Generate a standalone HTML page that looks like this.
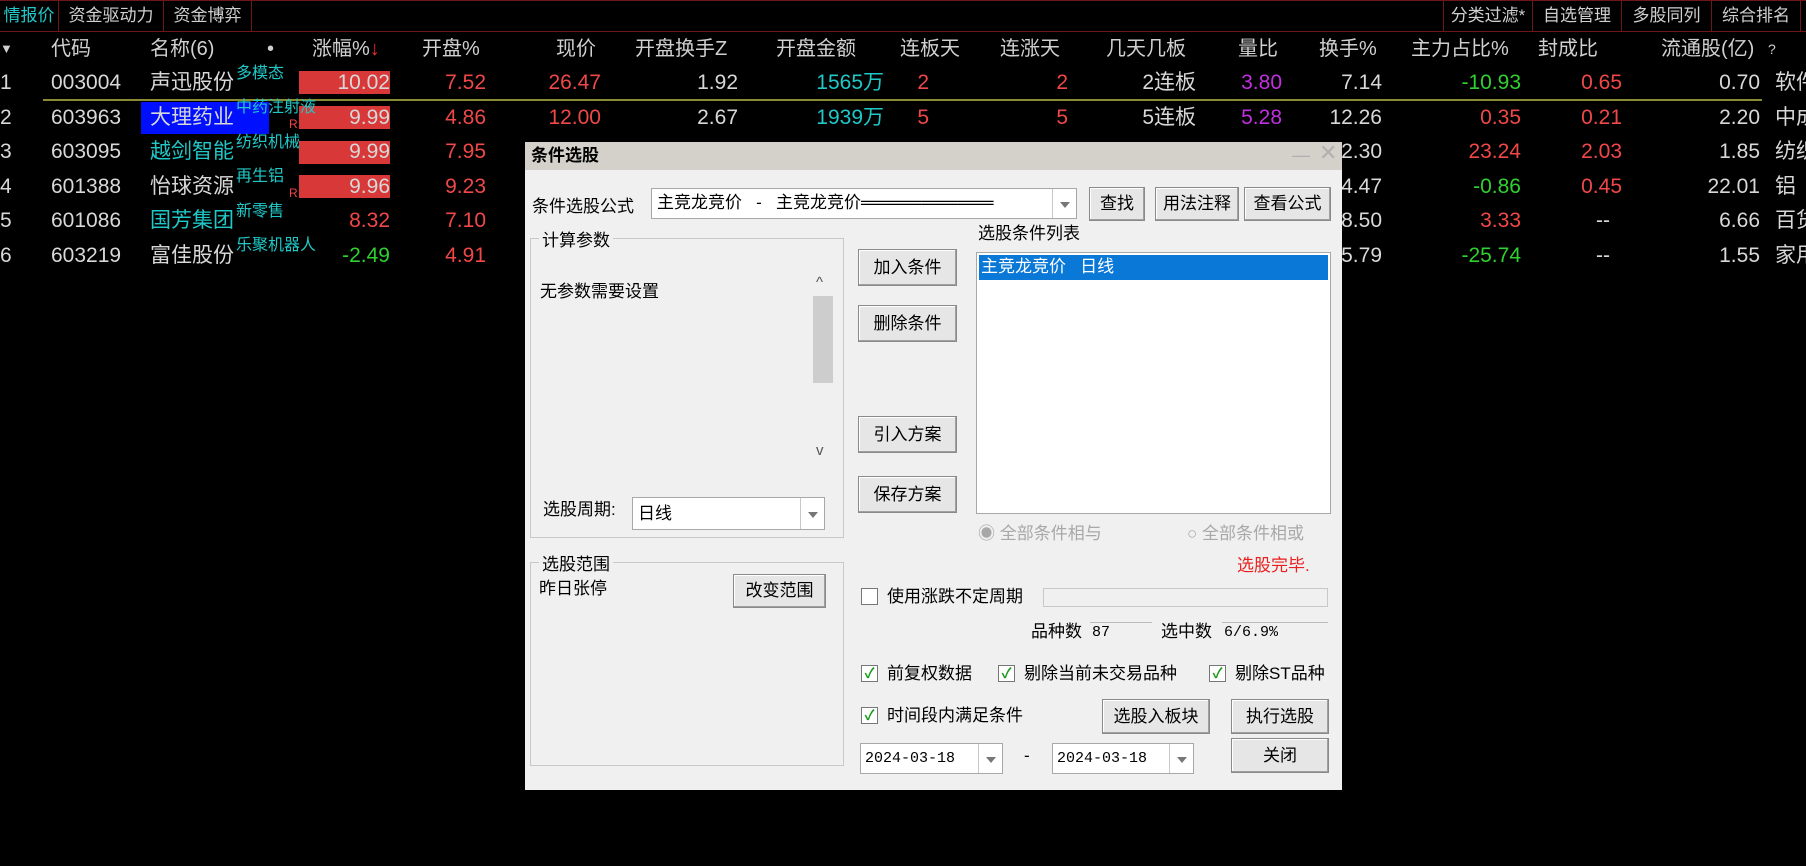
<!DOCTYPE html>
<html><head><meta charset="utf-8"><style>
*{margin:0;padding:0;box-sizing:border-box}
body{width:1806px;height:866px;background:#000;position:relative;overflow:hidden;font-family:"Liberation Sans","Noto Sans CJK SC",sans-serif;color:#d8d8d8}
.a{position:absolute;white-space:nowrap}
.tab{position:absolute;top:0;height:32px;border-right:1px solid #6a1818;font-size:17px;line-height:32px;color:#d0d0d0;text-align:center}
.h{position:absolute;top:36px;font-size:20px;line-height:26px;color:#d0d0d0;white-space:nowrap}
.r{position:absolute;font-size:21px;line-height:26px;white-space:nowrap}
.rt{text-align:right}
.red{color:#f04848}.cy{color:#20c8c8}.gr{color:#30d030}.pu{color:#c030e0}.wh{color:#d8d8d8}
.cn{position:absolute;font-size:16px;color:#20c8c8;white-space:nowrap;line-height:18px}
.dlg{position:absolute;left:525px;top:142px;width:817px;height:648px;background:#f0f0f0;font-size:17px;color:#000;font-family:"Liberation Sans","Noto Sans CJK SC",sans-serif}
.dlg .a{line-height:22px}
.btn{position:absolute;background:#e6e6e6;border:1px solid #8a8a8a;box-shadow:inset -1px -1px 0 #a0a0a0,inset 1px 1px 0 #fff;text-align:center;font-size:17px}
.box{position:absolute;background:#fff;border:1px solid #a8a8a8}
.grp{position:absolute;border:1px solid #c8c8c8}
.grp span{position:absolute;top:-13px;left:8px;background:#f0f0f0;padding:0 3px;font-size:17px}
.dd{position:absolute;top:0;right:0;width:24px;height:100%;border-left:1px solid #c8c8c8;background:#fff}
.dd:after{content:"";position:absolute;left:7px;top:50%;margin-top:-2px;border-left:5px solid transparent;border-right:5px solid transparent;border-top:6px solid #777}
.cb{position:absolute;width:17px;height:17px;border:1px solid #777;background:#fff;font-size:14px;color:#1a9a1a;line-height:15px;text-align:center;font-weight:bold}
</style></head><body>
<div style="position:absolute;left:0;top:31px;width:1806px;height:1px;background:#6a1818"></div>
<div style="position:absolute;left:0;top:0;width:1806px;height:1px;background:#6a1818"></div>
<div class="tab" style="left:0;width:59px;color:#20c8c8">情报价</div>
<div class="tab" style="left:59px;width:105px">资金驱动力</div>
<div class="tab" style="left:164px;width:88px">资金博弈</div>
<div class="tab" style="left:1443px;width:90px;border-left:1px solid #6a1818">分类过滤*</div>
<div class="tab" style="left:1533px;width:89px">自选管理</div>
<div class="tab" style="left:1622px;width:90px">多股同列</div>
<div class="tab" style="left:1712px;width:89px">综合排名</div>

<div class="h" style="left:0;font-size:13px">▼</div>
<div class="h" style="left:51px">代码</div>
<div class="h" style="left:150px">名称(6)</div>
<div class="h" style="left:267px">•</div>
<div class="h" style="left:312px">涨幅%<span style="color:#f03030">↓</span></div>
<div class="h" style="left:422px">开盘%</div>
<div class="h" style="left:556px">现价</div>
<div class="h" style="left:635px">开盘换手Z</div>
<div class="h" style="left:776px">开盘金额</div>
<div class="h" style="left:900px">连板天</div>
<div class="h" style="left:1000px">连涨天</div>
<div class="h" style="left:1106px">几天几板</div>
<div class="h" style="left:1238px">量比</div>
<div class="h" style="left:1319px">换手%</div>
<div class="h" style="left:1411px">主力占比%</div>
<div class="h" style="left:1538px">封成比</div>
<div class="h" style="left:1661px">流通股(亿)</div>
<div class="h" style="left:1768px;font-size:14px">?</div>

<div style="position:absolute;left:43px;top:99px;width:1719px;height:2px;background:#8a8a30"></div>
<div style="position:absolute;left:141px;top:102px;width:128px;height:32px;background:#0010ff"></div>
<div style="position:absolute;left:299px;top:71px;width:91px;height:23px;background:#d83838"></div>
<div style="position:absolute;left:299px;top:106px;width:91px;height:23px;background:#d83838"></div>
<div style="position:absolute;left:299px;top:141px;width:91px;height:23px;background:#d83838"></div>
<div style="position:absolute;left:299px;top:175px;width:91px;height:23px;background:#d83838"></div>

<div class="r" style="left:0;top:70px">1</div><div class="r" style="left:51px;top:70px">003004</div><div class="r" style="left:150px;top:70px">声迅股份</div><div class="cn" style="left:236px;top:65px">多模态</div>
<div class="r" style="left:0;top:105px">2</div><div class="r" style="left:51px;top:105px">603963</div><div class="r" style="left:150px;top:105px">大理药业</div><div class="cn" style="left:236px;top:99px">中药注射液</div>
<div class="r" style="left:0;top:139px">3</div><div class="r" style="left:51px;top:139px">603095</div><div class="r cy" style="left:150px;top:139px">越剑智能</div><div class="cn" style="left:236px;top:134px">纺织机械</div>
<div class="r" style="left:0;top:174px">4</div><div class="r" style="left:51px;top:174px">601388</div><div class="r" style="left:150px;top:174px">怡球资源</div><div class="cn" style="left:236px;top:168px">再生铝</div>
<div class="r" style="left:0;top:208px">5</div><div class="r" style="left:51px;top:208px">601086</div><div class="r cy" style="left:150px;top:208px">国芳集团</div><div class="cn" style="left:236px;top:203px">新零售</div>
<div class="r" style="left:0;top:243px">6</div><div class="r" style="left:51px;top:243px">603219</div><div class="r" style="left:150px;top:243px">富佳股份</div><div class="cn" style="left:236px;top:237px">乐聚机器人</div>
<div class="a" style="left:289px;top:117px;font-size:12px;color:#f04848">R</div>
<div class="a" style="left:289px;top:186px;font-size:12px;color:#f04848">R</div>

<div class="r rt wh" style="right:1416px;top:70px">10.02</div>
<div class="r rt wh" style="right:1416px;top:105px">9.99</div>
<div class="r rt wh" style="right:1416px;top:139px">9.99</div>
<div class="r rt wh" style="right:1416px;top:174px">9.96</div>
<div class="r rt red" style="right:1416px;top:208px">8.32</div>
<div class="r rt gr" style="right:1416px;top:243px">-2.49</div>

<div class="r rt red" style="right:1320px;top:70px">7.52</div>
<div class="r rt red" style="right:1320px;top:105px">4.86</div>
<div class="r rt red" style="right:1320px;top:139px">7.95</div>
<div class="r rt red" style="right:1320px;top:174px">9.23</div>
<div class="r rt red" style="right:1320px;top:208px">7.10</div>
<div class="r rt red" style="right:1320px;top:243px">4.91</div>

<div class="r rt red" style="right:1205px;top:70px">26.47</div>
<div class="r rt red" style="right:1205px;top:105px">12.00</div>
<div class="r rt wh" style="right:1068px;top:70px">1.92</div>
<div class="r rt wh" style="right:1068px;top:105px">2.67</div>
<div class="r rt cy" style="right:922px;top:70px">1565万</div>
<div class="r rt cy" style="right:922px;top:105px">1939万</div>
<div class="r rt red" style="right:877px;top:70px">2</div>
<div class="r rt red" style="right:877px;top:105px">5</div>
<div class="r rt red" style="right:738px;top:70px">2</div>
<div class="r rt red" style="right:738px;top:105px">5</div>
<div class="r rt wh" style="right:610px;top:70px">2连板</div>
<div class="r rt wh" style="right:610px;top:105px">5连板</div>
<div class="r rt pu" style="right:524px;top:70px">3.80</div>
<div class="r rt pu" style="right:524px;top:105px">5.28</div>

<div class="r rt wh" style="right:424px;top:70px">7.14</div>
<div class="r rt wh" style="right:424px;top:105px">12.26</div>
<div class="r rt wh" style="right:424px;top:139px">2.30</div>
<div class="r rt wh" style="right:424px;top:174px">4.47</div>
<div class="r rt wh" style="right:424px;top:208px">8.50</div>
<div class="r rt wh" style="right:424px;top:243px">5.79</div>

<div class="r rt gr" style="right:285px;top:70px">-10.93</div>
<div class="r rt red" style="right:285px;top:105px">0.35</div>
<div class="r rt red" style="right:285px;top:139px">23.24</div>
<div class="r rt gr" style="right:285px;top:174px">-0.86</div>
<div class="r rt red" style="right:285px;top:208px">3.33</div>
<div class="r rt gr" style="right:285px;top:243px">-25.74</div>

<div class="r rt red" style="right:184px;top:70px">0.65</div>
<div class="r rt red" style="right:184px;top:105px">0.21</div>
<div class="r rt red" style="right:184px;top:139px">2.03</div>
<div class="r rt red" style="right:184px;top:174px">0.45</div>
<div class="r rt wh" style="right:196px;top:208px">--</div>
<div class="r rt wh" style="right:196px;top:243px">--</div>

<div class="r rt wh" style="right:46px;top:70px">0.70</div>
<div class="r rt wh" style="right:46px;top:105px">2.20</div>
<div class="r rt wh" style="right:46px;top:139px">1.85</div>
<div class="r rt wh" style="right:46px;top:174px">22.01</div>
<div class="r rt wh" style="right:46px;top:208px">6.66</div>
<div class="r rt wh" style="right:46px;top:243px">1.55</div>
<div class="r" style="left:1775px;top:70px">软件</div>
<div class="r" style="left:1775px;top:105px">中成</div>
<div class="r" style="left:1775px;top:139px">纺织</div>
<div class="r" style="left:1775px;top:174px">铝</div>
<div class="r" style="left:1775px;top:208px">百货</div>
<div class="r" style="left:1775px;top:243px">家用</div>

<div class="dlg">
 <div style="position:absolute;left:0;top:0;width:817px;height:28px;background:#d4d1cb"></div>
 <div class="a" style="left:6px;top:3px;font-weight:bold;font-size:17px">条件选股</div>
 <div class="a" style="left:767px;top:2px;color:#b0b0b0;font-size:18px">—</div>
 <div class="a" style="left:794px;top:0px;color:#b0b0b0;font-size:22px">✕</div>

 <div class="a" style="left:7px;top:54px">条件选股公式</div>
 <div class="box" style="left:126px;top:46px;width:426px;height:31px"><div class="a" style="left:5px;top:3px">主竞龙竞价&nbsp;&nbsp;&nbsp;-&nbsp;&nbsp;&nbsp;主竞龙竞价═══════════</div><div class="dd"></div></div>
 <div class="btn" style="left:564px;top:45px;width:56px;height:34px;line-height:32px">查找</div>
 <div class="btn" style="left:630px;top:45px;width:84px;height:34px;line-height:32px">用法注释</div>
 <div class="btn" style="left:719px;top:45px;width:87px;height:34px;line-height:32px">查看公式</div>

 <div class="grp" style="left:5px;top:96px;width:314px;height:300px"><span>计算参数</span></div>
 <div class="a" style="left:15px;top:139px">无参数需要设置</div>
 <div class="a" style="left:291px;top:130px;font-size:15px;color:#555">^</div>
 <div style="position:absolute;left:288px;top:154px;width:20px;height:87px;background:#cdcdcd"></div>
 <div class="a" style="left:291px;top:298px;font-size:15px;color:#555">v</div>
 <div class="a" style="left:18px;top:357px">选股周期:</div>
 <div class="box" style="left:107px;top:355px;width:193px;height:33px"><div class="a" style="left:5px;top:5px">日线</div><div class="dd"></div></div>

 <div class="grp" style="left:5px;top:420px;width:314px;height:204px"><span>选股范围</span></div>
 <div class="a" style="left:14px;top:436px">昨日张停</div>
 <div class="btn" style="left:208px;top:432px;width:93px;height:34px;line-height:32px">改变范围</div>

 <div class="btn" style="left:333px;top:107px;width:99px;height:37px;line-height:35px">加入条件</div>
 <div class="btn" style="left:333px;top:163px;width:99px;height:37px;line-height:35px">删除条件</div>
 <div class="btn" style="left:333px;top:274px;width:99px;height:37px;line-height:35px">引入方案</div>
 <div class="btn" style="left:333px;top:334px;width:99px;height:37px;line-height:35px">保存方案</div>

 <div class="a" style="left:453px;top:81px">选股条件列表</div>
 <div class="box" style="left:451px;top:110px;width:355px;height:262px">
  <div style="position:absolute;left:2px;top:2px;width:349px;height:25px;background:#0a78d7;color:#fff;padding-left:2px;line-height:24px">主竞龙竞价&nbsp;&nbsp;&nbsp;日线</div>
 </div>
 <div class="a" style="left:453px;top:381px;color:#a8a8a8">◉ 全部条件相与</div>
 <div class="a" style="left:662px;top:381px;color:#a8a8a8">○ 全部条件相或</div>
 <div class="a" style="left:712px;top:413px;color:#e82020">选股完毕.</div>

 <div class="cb" style="left:336px;top:446px"></div>
 <div class="a" style="left:362px;top:444px">使用涨跌不定周期</div>
 <div style="position:absolute;left:518px;top:446px;width:285px;height:19px;border:1px solid #c8c8c8;background:#f0f0f0"></div>
 <div class="a" style="left:506px;top:479px">品种数</div>
 <div style="position:absolute;left:565px;top:480px;width:62px;height:21px;border-top:1px solid #bbb;font-family:'Liberation Mono',monospace;font-size:15px;padding-left:2px;line-height:20px">87</div>
 <div class="a" style="left:636px;top:479px">选中数</div>
 <div style="position:absolute;left:697px;top:480px;width:106px;height:21px;border-top:1px solid #bbb;font-family:'Liberation Mono',monospace;font-size:15px;padding-left:2px;line-height:20px">6/6.9%</div>

 <div class="cb" style="left:336px;top:523px">✓</div><div class="a" style="left:362px;top:521px">前复权数据</div>
 <div class="cb" style="left:473px;top:523px">✓</div><div class="a" style="left:499px;top:521px">剔除当前未交易品种</div>
 <div class="cb" style="left:684px;top:523px">✓</div><div class="a" style="left:710px;top:521px">剔除ST品种</div>

 <div class="cb" style="left:336px;top:565px">✓</div><div class="a" style="left:362px;top:563px">时间段内满足条件</div>
 <div class="btn" style="left:577px;top:557px;width:108px;height:35px;line-height:33px">选股入板块</div>
 <div class="btn" style="left:706px;top:557px;width:98px;height:35px;line-height:33px">执行选股</div>
 <div class="box" style="left:335px;top:601px;width:143px;height:31px"><div class="a" style="left:4px;top:4px;font-family:'Liberation Mono',monospace;font-size:15px">2024-03-18</div><div class="dd"></div></div>
 <div class="a" style="left:499px;top:603px">-</div>
 <div class="box" style="left:527px;top:601px;width:142px;height:31px"><div class="a" style="left:4px;top:4px;font-family:'Liberation Mono',monospace;font-size:15px">2024-03-18</div><div class="dd"></div></div>
 <div class="btn" style="left:706px;top:596px;width:98px;height:35px;line-height:33px">关闭</div>
</div>
</body></html>
